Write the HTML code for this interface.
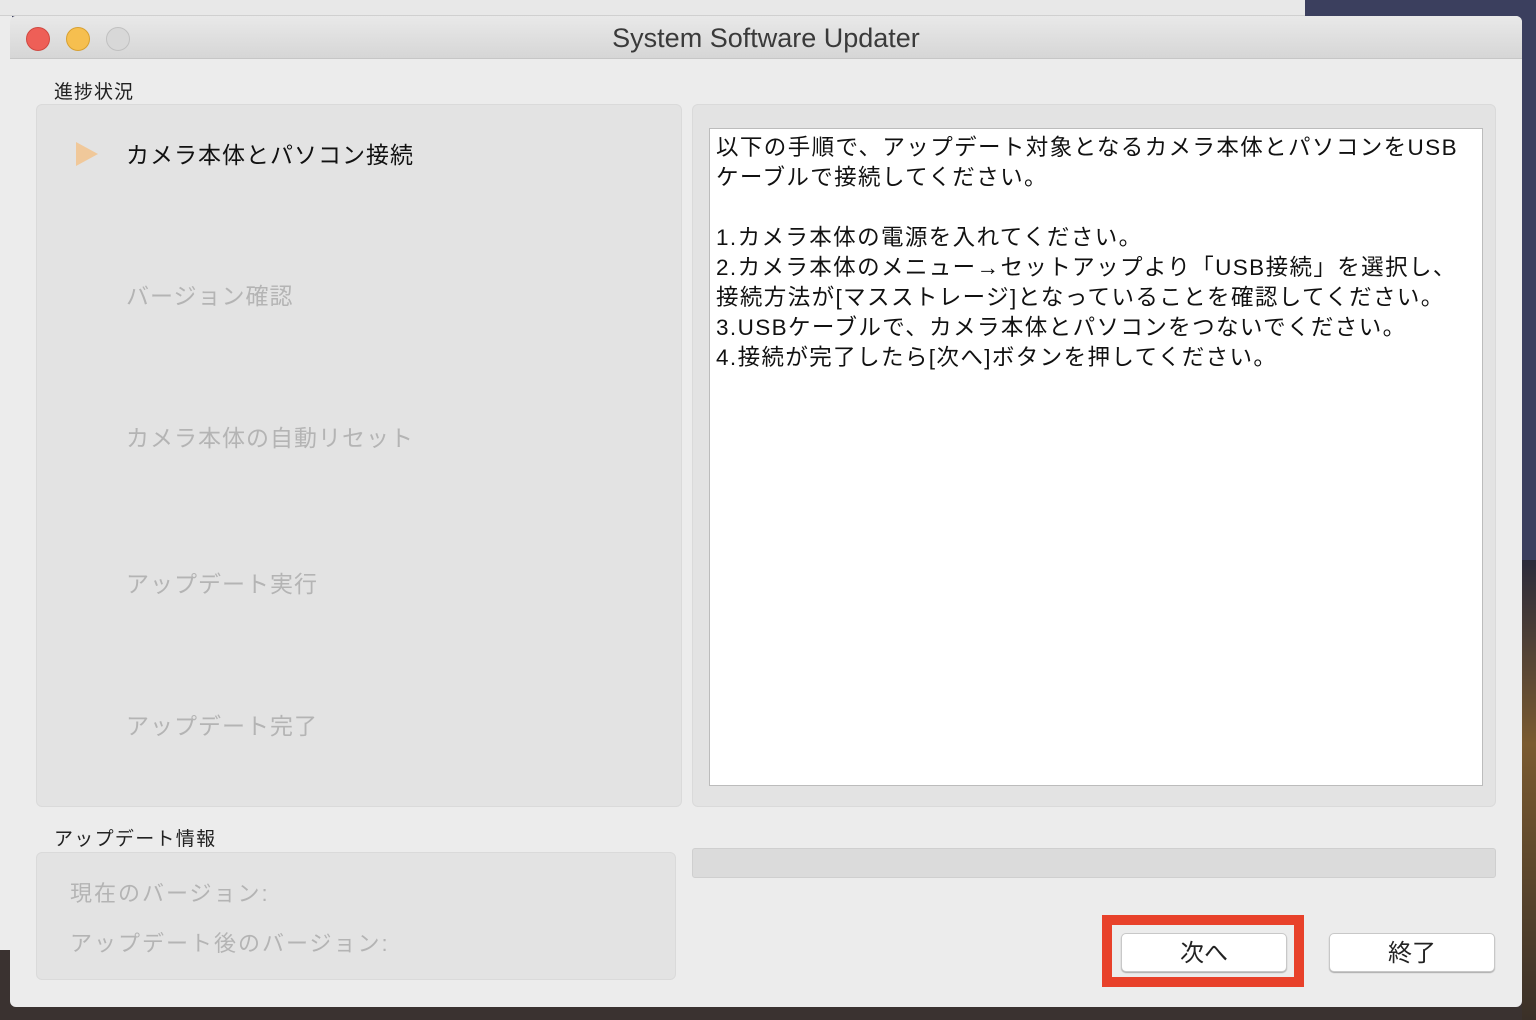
<!DOCTYPE html>
<html><head><meta charset="utf-8"><style>
*{margin:0;padding:0;box-sizing:border-box}
body{width:1536px;height:1020px;overflow:hidden;position:relative;background:#3b3f5e;font-family:"Liberation Sans","Noto Sans CJK JP",sans-serif}
.bgtop{position:absolute;left:0;top:0;width:1305px;height:16px;background:#e8e8e8;border-bottom:1px solid #d0d0d0}
.bgleft{position:absolute;left:0;top:16px;width:12px;height:934px;background:#ececec}
.bgbot{position:absolute;left:0;top:950px;width:1536px;height:70px;background:#3a3230}
.bgright{position:absolute;left:1522px;top:560px;width:14px;height:460px;background:linear-gradient(#2c2b3a,#7a5a30 40%,#3a3028)}
.win{position:absolute;left:10px;top:16px;width:1512px;height:991px;background:#ececec;border-radius:6px;overflow:hidden}
.title{height:43px;background:linear-gradient(#e9e9e9,#d6d6d6);border-bottom:1px solid #c6c6c6;text-align:center;font-size:27px;line-height:45px;color:#3a3a3a}
.dot{position:absolute;top:11px;width:24px;height:24px;border-radius:50%}
.lbl{position:absolute;font-size:19px;color:#222;letter-spacing:1px}
.panel{position:absolute;background:#e3e3e3;border:1px solid #dadada;border-radius:6px}
.step{position:absolute;left:116px;font-size:23px;color:#b4b4b4;letter-spacing:1px}
.txt{position:absolute;left:699px;top:112px;width:774px;height:658px;background:#fff;border:1px solid #bcbcbc;padding:4px 6px;font-size:22.5px;line-height:30px;color:#111;white-space:pre;letter-spacing:1.4px}
.btn{position:absolute;top:917px;height:39px;background:#fff;border:1px solid #c8c8c8;border-radius:5px;box-shadow:0 1px 1px #aaa;font-size:24px;text-align:center;line-height:39px;color:#222}
</style></head><body>
<div class="bgtop"></div><div class="bgleft"></div><div class="bgbot"></div><div class="bgright"></div>
<div class="win">
<div class="title">System Software Updater</div>
<div class="dot" style="left:16px;background:#ee5f57;border:1px solid #d04840"></div>
<div class="dot" style="left:56px;background:#f6bf4f;border:1px solid #d8a030"></div>
<div class="dot" style="left:96px;background:#d8d8d8;border:1px solid #c0c0c0"></div>
<div class="lbl" style="left:44px;top:61px">進捗状況</div>
<div class="panel" style="left:26px;top:88px;width:646px;height:703px"></div>
<svg style="position:absolute;left:66px;top:126px" width="22" height="24"><polygon points="0,0 22,12 0,24" fill="#f0c89a"/></svg>
<div class="step" style="top:120px;color:#111">カメラ本体とパソコン接続</div>
<div class="step" style="top:261px">バージョン確認</div>
<div class="step" style="top:403px">カメラ本体の自動リセット</div>
<div class="step" style="top:549px">アップデート実行</div>
<div class="step" style="top:691px">アップデート完了</div>
<div class="panel" style="left:682px;top:88px;width:804px;height:703px"></div>
<div class="txt">以下の手順で、アップデート対象となるカメラ本体とパソコンをUSB
ケーブルで接続してください。

1.カメラ本体の電源を入れてください。
2.カメラ本体のメニュー→セットアップより「USB接続」を選択し、
接続方法が[マスストレージ]となっていることを確認してください。
3.USBケーブルで、カメラ本体とパソコンをつないでください。
4.接続が完了したら[次へ]ボタンを押してください。</div>
<div class="lbl" style="left:44px;top:808px;letter-spacing:1.3px">アップデート情報</div>
<div class="panel" style="left:26px;top:836px;width:640px;height:128px"></div>
<div class="step" style="left:60px;top:860px;font-size:22px;letter-spacing:2px">現在のバージョン:</div>
<div class="step" style="left:60px;top:910px;font-size:22px;letter-spacing:2px">アップデート後のバージョン:</div>
<div class="panel" style="left:682px;top:832px;width:804px;height:30px;background:#dbdbdb;border-color:#cfcfcf;border-radius:3px"></div>
<div style="position:absolute;left:1092px;top:899px;width:202px;height:72px;border:10px solid #e8412a"></div>
<div class="btn" style="left:1111px;width:166px">次へ</div>
<div class="btn" style="left:1319px;width:166px">終了</div>
</div>
</body></html>
